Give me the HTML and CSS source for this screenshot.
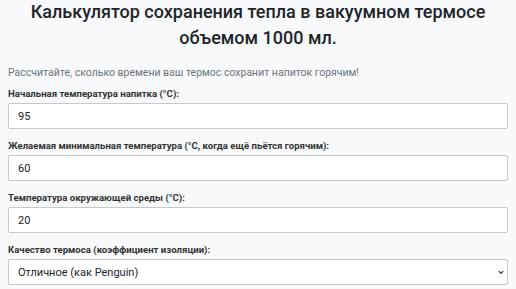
FILE: index.html
```html
<!DOCTYPE html>
<html lang="ru">
<head>
    <meta charset="UTF-8">
    <meta name="viewport" content="width=device-width, initial-scale=1.0">
    <title>Калькулятор сохранения тепла</title>
    <link rel="stylesheet" href="styles.css">
</head>
<body>

<div class="calc">
    <h1>Калькулятор сохранения тепла в вакуумном термосе объемом 1000 мл.</h1>
    <p class="lead">Рассчитайте, сколько времени ваш термос сохранит напиток горячим!</p>

    <div class="field">
        <label for="startTemp">Начальная температура напитка (°C):</label>
        <input type="number" id="startTemp" value="95">
    </div>

    <div class="field">
        <label for="minTemp">Желаемая минимальная температура (°C, когда ещё пьётся горячим):</label>
        <input type="number" id="minTemp" value="60">
    </div>

    <div class="field">
        <label for="ambient">Температура окружающей среды (°C):</label>
        <input type="number" id="ambient" value="20">
    </div>

    <div class="field">
        <label for="quality">Качество термоса (коэффициент изоляции):</label>
        <select id="quality">
            <option>Отличное (как Penguin)</option>
            <option>Хорошее</option>
            <option>Среднее</option>
        </select>
    </div>
</div>

</body>
</html>
```

FILE: styles.css
```css
body {
    font-family: Roboto, "Open Sans", sans-serif;
    margin: 0 8px;
    background-color: #f8f9fa;
    color: #212529;
}
.calc h1 {
    font-size: 18px;
    font-weight: 500;
    line-height: 26px;
    text-align: center;
    margin: -1px 0 14px;
    color: #212529;
}
.lead {
    font-size: 10.5px;
    color: #6c757d;
    margin: 0 0 6px;
    line-height: 16px;
}
.field {
    margin-bottom: 10px;
}
.field label {
    display: block;
    font-size: 9.6px;
    font-weight: 700;
    line-height: 14px;
    margin-bottom: 2px;
    color: #333;
}
.field input, .field select {
    display: block;
    width: 100%;
    box-sizing: border-box;
    height: 26px;
    padding: 0 9px;
    font-family: inherit;
    font-size: 11px;
    color: #212529;
    background: #fff;
    border: 1px solid #c8c8c8;
    border-radius: 2px;
}
.field input::-webkit-inner-spin-button {
    -webkit-appearance: none;
}
.field select {
    -webkit-appearance: none;
    appearance: none;
    background-image: url("data:image/svg+xml,%3Csvg xmlns='http://www.w3.org/2000/svg' width='6' height='5' viewBox='0 0 6 5'%3E%3Cpath d='M0.8 1.2l2.2 2.3 2.2-2.3' fill='none' stroke='%23333' stroke-width='1.2'/%3E%3C/svg%3E");
    background-repeat: no-repeat;
    background-position: right 3px center;
}
```
